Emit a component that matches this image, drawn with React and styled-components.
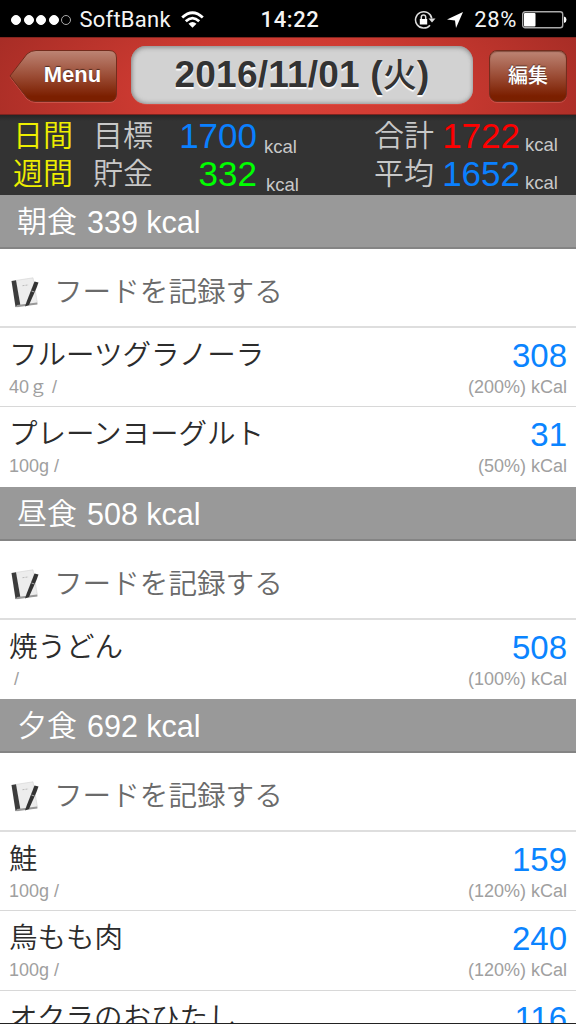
import React from "react";
import styled, { createGlobalStyle } from "styled-components";

const Global = createGlobalStyle`
  * { box-sizing: border-box; }
  body { margin: 0; background: #fff; overflow: hidden; font-family: "Liberation Sans", "Noto Sans CJK JP", sans-serif; }
  button { font-family: inherit; }
`;

const Screen = styled.div`
  width: 576px;
  height: 1024px;
  overflow: hidden;
  display: flex;
  flex-direction: column;
  border-bottom: 1px solid #222;
  background: #fff;
`;

/* status bar */
const StatusBar = styled.header`
  flex: none;
  height: 37px;
  background: #000;
  color: #f4f4f4;
  display: grid;
  grid-template-columns: 1fr auto 1fr;
  align-items: center;
  padding: 0 9px 0 11px;
  font: 22px/37px Roboto, "Liberation Sans", sans-serif;
  white-space: nowrap;
`;
const StatusSide = styled.div`
  display: flex;
  align-items: center;
  justify-content: ${(p) => (p.$end ? "flex-end" : "flex-start")};
  height: 37px;
  padding-top: 1px;
`;
const Signal = styled.div`
  display: flex;
  gap: 2.6px;
  margin-right: 8px;
`;
const Dot = styled.span`
  width: 10px;
  height: 10px;
  border-radius: 50%;
  background: ${(p) => (p.$on ? "#fff" : "transparent")};
  border: 1px solid ${(p) => (p.$on ? "#fff" : "#aaa")};
`;
const Carrier = styled.span`
  letter-spacing: 0.25px;
  margin-right: 10px;
`;
const Clock = styled.span`
  padding: 1px 0 0 2px;
  font-weight: 500;
  letter-spacing: 0.6px;
`;
const Percent = styled.span`
  margin: 0 5px 0 11px;
  letter-spacing: 0.6px;
`;

/* navigation bar */
const NavBar = styled.nav`
  flex: none;
  height: 78px;
  display: flex;
  align-items: flex-start;
  padding: 8px 9px 0;
  background: radial-gradient(ellipse 330px 150px at 50% 80%, #d94037 0%, #cf3b32 40%, #a52c25 100%);
  border-top: 1px solid #84251f;
  border-bottom: 1px solid #7c241f;
`;
const BackButton = styled.button`
  position: relative;
  width: 108px;
  height: 52px;
  margin: 4px 14px 0 0;
  padding: 0 0 3px 19px;
  border: 0;
  background: none;
  color: #fff;
  font-size: 22px;
  font-weight: 700;
  text-shadow: 0 -1px 1px #0008;
`;
const BackShape = styled.svg`
  position: absolute;
  inset: 0;
`;
const Label = styled.span`
  position: relative;
`;
const TitlePlate = styled.h1`
  width: 342px;
  height: 58px;
  margin: 0 16px 0 0;
  border-radius: 15px;
  background: #d2d2d2;
  box-shadow: inset 0 2px 4px #7779, inset 1px -1px 4px #7779, 0 1px 0 #e8665c55;
  color: #333;
  font-size: 37px;
  font-weight: 700;
  line-height: 57px;
  text-align: center;
  text-shadow: 0 2px 1px #fff;
  letter-spacing: 0.2px;
  white-space: nowrap;
`;
const Kanji = styled.span`
  font-family: "Noto Sans CJK JP", sans-serif;
  font-size: 34px;
  line-height: 1;
  font-weight: 500;
`;
const EditButton = styled.button`
  width: 78px;
  height: 52px;
  margin-top: 4px;
  padding: 0 0 3px;
  border: 1px solid #742c1d;
  border-radius: 8px;
  background: linear-gradient(#bd8575, #9b4c35 50%, #7b1f00 90%, #792000);
  box-shadow: inset 0 1px 1px #54201488, 0 1px 0 #d8695d88;
  color: #fff;
  font-family: "Noto Sans CJK JP", sans-serif;
  font-size: 20px;
  font-weight: 500;
  text-shadow: 0 -1px 1px #0007;
`;

/* summary */
const Summary = styled.section`
  flex: none;
  height: 80px;
  padding: 0 0 4px;
  background: linear-gradient(#252525, #333 6px);
  color: #c8c8c8;
`;
const SummaryRow = styled.div`
  display: grid;
  grid-template-columns: 80px 62px 102px 117px 61px 85px 1fr;
  height: 38px;
  line-height: 36px;
  padding-left: 13px;
  font-size: 30px;
  font-family: "Noto Sans CJK JP", sans-serif;
  font-weight: 350;
  white-space: nowrap;
`;
const Period = styled.span`
  color: #ee0;
`;
const Amount = styled.span`
  font: 35px/42px "Liberation Sans", sans-serif;
  text-align: right;
  color: ${(p) => p.$color};
`;
const Unit = styled.span`
  font: 18.5px/20px "Liberation Sans", sans-serif;
  padding: ${(p) => p.$top}px 0 0 ${(p) => p.$indent}px;
`;

/* meals */
const MealHeader = styled.h2`
  flex: none;
  display: flex;
  gap: 10px;
  height: 54px;
  margin: 0;
  padding-left: 17px;
  background: #999;
  border-bottom: 2px solid #848484;
  color: #fff;
  font: 30.5px/54px "Liberation Sans", sans-serif;
`;
const MealName = styled.span`
  font: 350 30px/49px "Noto Sans CJK JP", sans-serif;
`;
const AddRow = styled.div`
  flex: none;
  display: flex;
  align-items: center;
  height: 79px;
  padding: 5px 0 0 9px;
  border-bottom: 2px solid #dedede;
  color: #6a6a6a;
  font: 350 28.6px/60px "Noto Sans CJK JP", sans-serif;
`;
const AddText = styled.span`
  margin-left: 14px;
`;
const FoodRow = styled.div`
  flex: none;
  display: grid;
  grid-template-columns: 1fr auto;
  grid-template-rows: 50px 29px;
  height: ${(p) => p.$h}px;
  padding: 0 9px;
  border-bottom: ${(p) => (p.$last ? 0 : 1)}px solid #d8d8d8;
  white-space: nowrap;
`;
const FoodName = styled.span`
  font: 350 28.5px/50px "Noto Sans CJK JP", sans-serif;
  color: #2c2c2c;
`;
const Kcal = styled.span`
  font: 33px/55px "Liberation Sans", sans-serif;
  color: #0a84ff;
  text-align: right;
`;
const Detail = styled.span`
  font: 18px/18px "Liberation Sans", "Noto Sans CJK JP", sans-serif;
  color: #a0a0a0;
  text-align: ${(p) => (p.$end ? "right" : "left")};
  white-space: pre;
`;

const Wifi = () => (
  <svg width="23" height="18" viewBox="0 0 23 18" fill="none" stroke="#fff" strokeWidth="2.8">
    <path d="M1.2 6.5Q11.5-3 21.8 6.5M4.8 10.2Q11.5 4 18.2 10.2" />
    <path d="M7.5 12.8Q11.5 9.2 15.5 12.8L11.5 16.8Z" fill="#fff" stroke="none" />
  </svg>
);
const RotationLock = () => (
  <svg width="22" height="20" viewBox="0 0 22 20" fill="none" stroke="#ddd" strokeWidth="1.5">
    <path d="M16 15.2A8.2 8.2 0 1 1 17.8 8.5" />
    <path d="M14.5 8.5H21.5L18 12.5Z" fill="#ddd" stroke="none" />
    <path d="M5.8 9H13.2V14.5H5.8Z" fill="#fff" stroke="none" />
    <path d="M7.3 9V7.2Q7.3 5 9.5 5T11.7 7.2V9" />
  </svg>
);
const ArrowIcon = styled.svg`
  margin-left: 11px;
`;
const Arrow = () => (
  <ArrowIcon width="16" height="16" viewBox="0 0 16 16">
    <path d="M16 0L9 16L8 8.500L0 7.500Z" fill="#fff" />
  </ArrowIcon>
);
const Battery = () => (
  <svg width="45" height="18" viewBox="0 0 45 18">
    <rect x=".7" y=".7" width="40" height="16" rx="2.5" fill="none" stroke="#aaa" strokeWidth="1.4" />
    <rect x="2" y="2" width="11.5" height="13.4" rx="1" fill="#fff" />
    <path d="M42 5.5Q44.5 6 44.5 8.7T42 12Z" fill="#fff" />
  </svg>
);
const NotebookIcon = styled.svg`
  margin-top: 6px;
`;
const Notebook = () => (
  <NotebookIcon width="31" height="32" viewBox="0 0 31 32">
    <path d="M6.500 3.500L24 .8L28.500 26.500L8 30Z" fill="#ededed" stroke="#d4d4d4" strokeWidth=".6" />
    <path d="M2.500 4L7 3.200L11.500 29L6.500 30Z" fill="#3c3c3c" />
    <path d="M8 28L28 25.500L28.500 27.500L6.500 30.200Z" fill="#999" />
    <path d="M13.500 8.700L19.500 7.900" stroke="#bbb" strokeDasharray="2 1" />
    <path d="M25.500 4.500L29.500 5.500L27.500 11L20 28L16 29.500L17.500 25Z" fill="#333" />
    <path d="M22.500 14L25.500 15" stroke="#aaa" />
  </NotebookIcon>
);

const meals = [
  {
    name: "朝食", total: 339,
    foods: [
      { name: "フルーツグラノーラ", kcal: 308, amount: "40ｇ /", rate: 200, h: 79 },
      { name: "プレーンヨーグルト", kcal: 31, amount: "100g /", rate: 50, h: 80, last: true },
    ],
  },
  {
    name: "昼食", total: 508,
    foods: [{ name: "焼うどん", kcal: 508, amount: " /", rate: 100, h: 79, last: true }],
  },
  {
    name: "夕食", total: 692,
    foods: [
      { name: "鮭", kcal: 159, amount: "100g /", rate: 120, h: 79 },
      { name: "鳥もも肉", kcal: 240, amount: "100g /", rate: 120, h: 80 },
      { name: "オクラのおひたし", kcal: 116, h: 79, last: true },
    ],
  },
];

const summary = [
  { period: "日間", left: "目標", a: 1700, ac: "#0a80ff", right: "合計", b: 1722, bc: "#f00", indent: 7 },
  { period: "週間", left: "貯金", a: 332, ac: "#0f0", right: "平均", b: 1652, bc: "#0a80ff", indent: 9 },
];

export default function App() {
  return (
    <Screen>
      <Global />
      <StatusBar>
        <StatusSide>
          <Signal>
            {[1, 1, 1, 1, 0].map((on, i) => <Dot key={i} $on={on} />)}
          </Signal>
          <Carrier>SoftBank</Carrier>
          <Wifi />
        </StatusSide>
        <Clock>14:22</Clock>
        <StatusSide $end>
          <RotationLock />
          <Arrow />
          <Percent>28%</Percent>
          <Battery />
        </StatusSide>
      </StatusBar>
      <NavBar>
        <BackButton>
          <BackShape width="108" height="54" viewBox="0 0 108 54">
            <defs>
              <linearGradient id="brown" x2="0" y2="1">
                <stop stopColor="#bd8575" />
                <stop offset=".5" stopColor="#9b4c35" />
                <stop offset=".9" stopColor="#7b1f00" />
              </linearGradient>
            </defs>
            <path d="M1 27L18 5Q22 1.500 27 1.500H100Q107.500 1.500 107.500 9V45Q107.500 52.500 100 52.500H27Q22 52.500 18 49Z" fill="none" stroke="#d8695d" strokeOpacity=".6" />
            <path d="M1 26L18 4Q22 .5 27 .5H100Q107.500 .5 107.500 8V44Q107.500 51.500 100 51.500H27Q22 51.500 18 48Z" fill="url(#brown)" stroke="#742c1d" />
          </BackShape>
          <Label>Menu</Label>
        </BackButton>
        <TitlePlate>2016/11/01 (<Kanji>火</Kanji>)</TitlePlate>
        <EditButton>編集</EditButton>
      </NavBar>
      <Summary>
        {summary.map((s) => (
          <SummaryRow key={s.period}>
            <Period>{s.period}</Period>
            <span>{s.left}</span>
            <Amount $color={s.ac}>{s.a}</Amount>
            <Unit $indent={s.indent} $top={22}>kcal</Unit>
            <span>{s.right}</span>
            <Amount $color={s.bc}>{s.b}</Amount>
            <Unit $indent={5} $top={20}>kcal</Unit>
          </SummaryRow>
        ))}
      </Summary>
      {meals.map((m) => (
        <React.Fragment key={m.name}>
          <MealHeader><MealName>{m.name}</MealName>{m.total} kcal</MealHeader>
          <AddRow><Notebook /><AddText>フードを記録する</AddText></AddRow>
          {m.foods.map((f) => (
            <FoodRow key={f.name} $h={f.h} $last={f.last}>
              <FoodName>{f.name}</FoodName>
              <Kcal>{f.kcal}</Kcal>
              {f.amount && <Detail>{f.amount}</Detail>}
              {f.rate && <Detail $end>({f.rate}%) kCal</Detail>}
            </FoodRow>
          ))}
        </React.Fragment>
      ))}
    </Screen>
  );
}
